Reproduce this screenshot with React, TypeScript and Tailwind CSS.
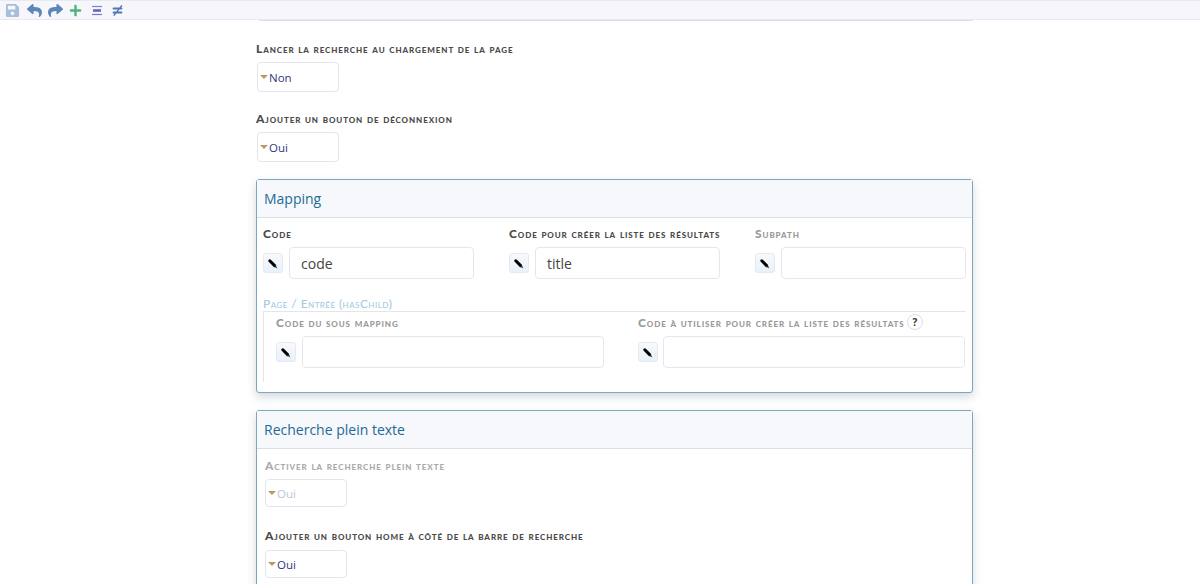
import { FaPlus, FaReply, FaSave, FaShare, FaNotEqual } from "react-icons/fa";

const labelClass =
  "block font-['Lato',sans-serif] font-black text-[12px] leading-[15px] tracking-[0.9px] [font-variant:small-caps]";

const EditButton = () => (
  <button className="flex h-5 w-5 shrink-0 items-center justify-center rounded-[3px] border border-[#e6e9f1] bg-gradient-to-b from-[#f8f9fc] to-[#e8f1fa]">
    <svg width="10" height="10" viewBox="0 0 10 10" className="mt-[2px]">
      <path d="M1.8 1.8 L6.6 6.6" stroke="#000" strokeWidth="3" strokeLinecap="round" />
      <path d="M6 7.6 L7.6 6 L9.4 9.4 Z" fill="#222" />
    </svg>
  </button>
);

const Select = ({ value, muted, height }: { value: string; muted?: boolean; height: string }) => (
  <div
    className={`flex ${height} w-[82px] items-center rounded-[4px] border border-[#e4e4ee] bg-white pl-[2px] pt-[2px] font-['Open_Sans',sans-serif] text-[11.5px]`}
  >
    <span className="mb-[2px] mr-[1px] h-0 w-0 border-x-[4px] border-t-[4px] border-x-transparent border-t-[#b89a62]" />
    <span className={muted ? "text-[#c3c3dc]" : "text-[#34347e]"}>{value}</span>
  </div>
);

const Field = ({
  label,
  value,
  inputWidth,
  labelColor,
  className,
  gap = "gap-[6px]",
}: {
  label: string;
  value?: string;
  inputWidth: string;
  labelColor: string;
  className: string;
  gap?: string;
}) => (
  <div className={className}>
    <label className={`${labelClass} ${labelColor}`}>{label}</label>
    <div className={`mt-[6px] flex items-center ${gap}`}>
      <EditButton />
      <div
        className={`flex h-[32px] ${inputWidth} items-center rounded-[4px] border border-[#e6e6f0] bg-white pl-[11px] font-['Open_Sans',sans-serif] text-[14px] text-[#444]`}
      >
        {value}
      </div>
    </div>
  </div>
);

const Card = ({ title, children, className }: { title: string; children: React.ReactNode; className?: string }) => (
  <section
    className={`rounded-[3px] border border-[#7ea6bc] bg-white shadow-[0_4px_10px_rgba(60,80,100,0.22)] ${className ?? ""}`}
  >
    <h2 className="flex h-[38px] items-center border-b border-[#d9dfe8] bg-[#f7f8fb] pl-[7px] font-['Open_Sans',sans-serif] text-[14px] font-medium text-[#1c6b96]">
      {title}
    </h2>
    {children}
  </section>
);

export default function App() {
  return (
    <div className="h-[584px] overflow-hidden bg-white">
      <div className="flex h-5 items-center border-y border-[#e9e9f1] bg-[#f7f7fb] pl-[5px]">
        <FaSave className="h-[15px] w-[15px] text-[#a7bedb]" />
        <FaReply className="ml-[7px] h-[15px] w-[15px] text-[#5d86b8]" />
        <FaShare className="ml-[6px] h-[15px] w-[15px] text-[#5d86b8]" />
        <FaPlus className="ml-[6px] h-[13px] w-[13px] text-[#4fb47c]" />
        <svg className="ml-[9px]" width="12" height="11" viewBox="0 0 12 11">
          <path d="M1 1.5h10" stroke="#6b8cb8" strokeWidth="1.2" />
          <path d="M2 5.5h8" stroke="#7a5cc0" strokeWidth="2.6" />
          <path d="M1 9.5h10" stroke="#6b7cc0" strokeWidth="1.2" />
        </svg>
        <FaNotEqual className="ml-[9px] h-[11px] w-[11px] text-[#4d7bb0]" />
      </div>

      <main className="ml-[256px] w-[717px]">
        <div className="ml-[3px] h-px bg-[#dcdcf0]" />

        <label className={`${labelClass} mt-[20px] text-[#4a4a4a]`}>Lancer la recherche au chargement de la page</label>
        <div className="ml-px mt-[6px]">
          <Select value="Non" height="h-[30px]" />
        </div>

        <label className={`${labelClass} mt-[19px] text-[#4a4a4a]`}>Ajouter un bouton de déconnexion</label>
        <div className="ml-px mt-[6px]">
          <Select value="Oui" height="h-[30px]" />
        </div>

        <Card title="Mapping" className="mt-[17px] h-[214px]">
          <div className="flex pl-[6px] pt-[8px]">
            <Field className="w-[246px]" label="Code" value="code" inputWidth="w-[185px]" labelColor="text-[#4a4a4a]" />
            <Field
              className="w-[246px]"
              label="Code pour créer la liste des résultats"
              value="title"
              inputWidth="w-[185px]"
              labelColor="text-[#4a4a4a]"
            />
            <Field className="w-[211px]" label="Subpath" inputWidth="w-[185px]" labelColor="text-[#999]" />
          </div>

          <div className="ml-[6px] mt-[17px] w-[703px]">
            <div className="font-['Lato',sans-serif] text-[12px] font-medium leading-[15px] tracking-[0.45px] text-[#a5cbe0] [font-variant:small-caps]">
              Page / Entrée (hasChild)
            </div>
            <div className="flex h-[71px] border-l border-t border-[#e4e4ee] pl-[12px] pt-[3px]">
              <Field className="w-[362px]" label="Code du sous mapping" inputWidth="w-[302px]" labelColor="text-[#999]" />
              <div className="relative">
                <Field
                  className="w-[328px]"
                  label="Code à utiliser pour créer la liste des résultats"
                  inputWidth="w-[302px]"
                  labelColor="text-[#999]"
                  gap="gap-[5px]"
                />
                <span className="absolute left-[269px] top-[-1px] flex h-4 w-4 items-center justify-center rounded-full border border-[#dcdce8] bg-white font-['Open_Sans',sans-serif] text-[10px] font-bold text-[#333]">
                  ?
                </span>
              </div>
            </div>
          </div>
        </Card>

        <Card title="Recherche plein texte" className="mt-[17px] h-[200px]">
          <div className="pl-2 pt-[9px]">
            <label className={`${labelClass} text-[#aaa]`}>Activer la recherche plein texte</label>
            <div className="mt-[6px]">
              <Select value="Oui" muted height="h-[28px]" />
            </div>
            <label className={`${labelClass} mt-[21px] text-[#4a4a4a]`}>
              Ajouter un bouton home à côté de la barre de recherche
            </label>
            <div className="mt-[7px]">
              <Select value="Oui" height="h-[28px]" />
            </div>
          </div>
        </Card>
      </main>
    </div>
  );
}
